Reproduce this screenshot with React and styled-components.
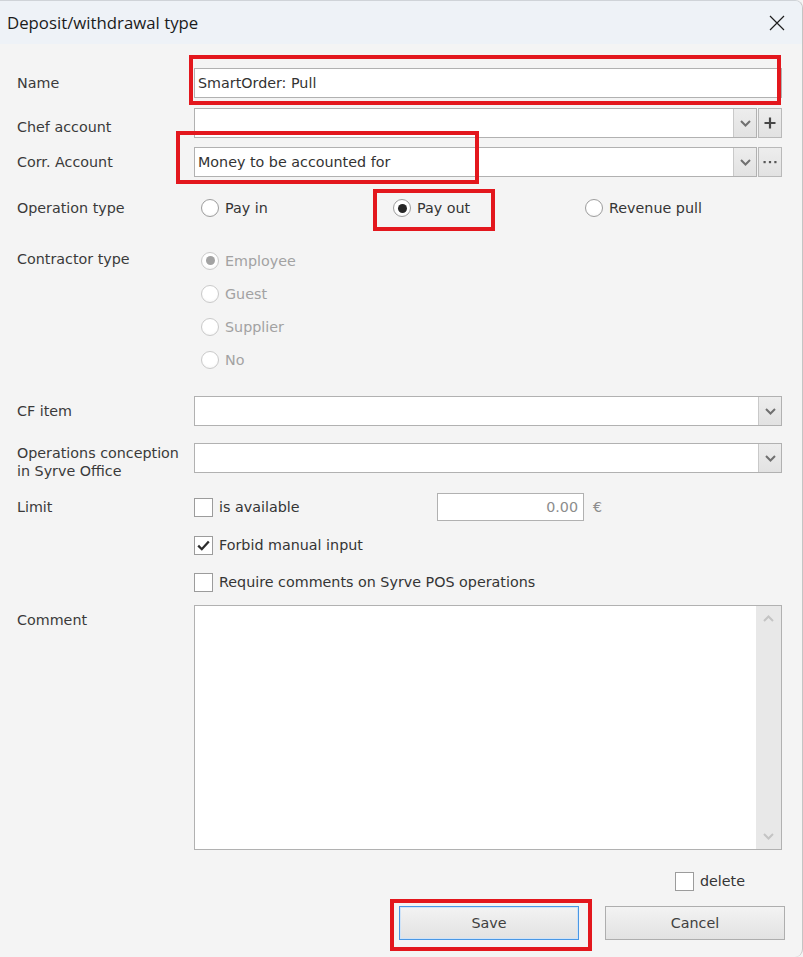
import React from 'react';
import styled, { createGlobalStyle, css } from 'styled-components';

const GlobalStyle = createGlobalStyle`
  html, body { margin: 0; padding: 0; background: #f4f4f4; }
  body { font-family: "DejaVu Sans", Verdana, sans-serif; }
  * { box-sizing: border-box; }
`;

const Window = styled.div`
  position: relative;
  width: 803px;
  height: 957px;
  background: #f4f4f4;
  border-top: 1px solid #cfd3d8;
  border-right: 1px solid #c4c4c4;
  border-top-right-radius: 8px;
  border-bottom-right-radius: 8px;
  overflow: hidden;
  display: flex;
  flex-direction: column;
`;

const TitleBar = styled.div`
  height: 43px;
  flex: none;
  background: #eef2f7;
  display: flex;
  align-items: center;
  justify-content: space-between;
  padding-left: 7px;
`;

const Title = styled.div`
  font-family: "Open Sans", "Noto Sans", sans-serif;
  font-size: 16.8px;
  color: #1b1b1b;
`;

const CloseButton = styled.div`
  width: 50px;
  height: 43px;
  display: flex;
  align-items: center;
  justify-content: center;
`;

const Form = styled.div`
  padding: 0 20px 0 17px;
  display: flex;
  flex-direction: column;
`;

const Row = styled.div`
  display: grid;
  grid-template-columns: 177px 1fr;
  margin-top: ${(p) => p.$gap || 0}px;
  height: ${(p) => p.$h}px;
  align-items: ${(p) => (p.$top ? 'start' : 'center')};
`;

const Label = styled.div`
  font-size: 14.3px;
  line-height: 18px;
  color: #3a3a3a;
  padding-top: ${(p) => p.$pt || 0}px;
  align-self: ${(p) => (p.$top ? 'start' : 'center')};
`;

const Text = styled.span`
  font-size: 14.3px;
  line-height: 18px;
  color: ${(p) => (p.$disabled ? '#a2a2a2' : '#353535')};
  white-space: nowrap;
`;

const Combo = styled.div`
  display: flex;
  gap: 1px;
  height: ${(p) => p.$h || 30}px;
`;

const TextBox = styled.div`
  flex: 1;
  height: 100%;
  border: 1px solid #b1b1b1;
  background: #fff;
  display: flex;
  align-items: center;
  padding-left: 3px;
  overflow: hidden;
`;

const BoxValue = styled.span`
  flex: 1;
  font-size: 14.3px;
  color: #333;
  white-space: nowrap;
`;

const sideButton = css`
  width: 23px;
  height: 100%;
  flex: none;
  display: flex;
  align-items: center;
  justify-content: center;
  background: linear-gradient(#ededed, #e2e2e2);
`;

const DropButton = styled.div`
  ${sideButton};
  border-left: 1px solid #c9c9c9;
`;

const ExtraButton = styled.div`
  ${sideButton};
  width: 24px;
  border: 1px solid #b9b9b9;
`;

const RadioGroup = styled.div`
  display: grid;
  grid-template-columns: repeat(3, 192px);
  padding-left: 7px;
`;

const RadioStack = styled.div`
  display: flex;
  flex-direction: column;
  padding-left: 7px;
`;

const Option = styled.label`
  display: flex;
  align-items: center;
  gap: 6px;
  height: ${(p) => p.$h || 30}px;
`;

const RadioCircle = styled.span`
  width: 18px;
  height: 18px;
  flex: none;
  border-radius: 50%;
  border: 1px solid ${(p) => (p.$disabled ? '#cacaca' : '#9d9d9d')};
  background: radial-gradient(circle at 50% 40%, #ffffff 55%, #f0f0f0);
  display: flex;
  align-items: center;
  justify-content: center;
  &::after {
    content: '';
    display: ${(p) => (p.$checked ? 'block' : 'none')};
    width: 9px;
    height: 9px;
    border-radius: 50%;
    background: ${(p) => (p.$disabled ? '#a3a3a3' : '#262626')};
  }
`;

const CheckSquare = styled.span`
  width: 19px;
  height: 19px;
  flex: none;
  border: 1px solid #9c9c9c;
  background: #fff;
  display: flex;
  align-items: center;
  justify-content: center;
`;

const LimitLine = styled.div`
  display: grid;
  grid-template-columns: 243px 147px auto;
  align-items: center;
  height: 100%;
`;

const NumberBox = styled.div`
  height: 28px;
  border: 1px solid #b1b1b1;
  background: #fff;
  display: flex;
  align-items: center;
  justify-content: flex-end;
  padding-right: 5px;
  font-size: 14.3px;
  color: #8c8c8c;
`;

const Currency = styled.span`
  margin-left: 9px;
  font-size: 14.3px;
  color: #8c8c8c;
`;

const Memo = styled.div`
  height: 245px;
  border: 1px solid #b1b1b1;
  background: #fff;
  display: flex;
  justify-content: flex-end;
`;

const ScrollTrack = styled.div`
  width: 25px;
  height: 100%;
  background: #e8e8e8;
  display: flex;
  flex-direction: column;
  justify-content: space-between;
  align-items: center;
  padding: 9px 0;
`;

const DeleteRow = styled.div`
  margin-top: 16px;
  height: 30px;
  display: flex;
  justify-content: flex-end;
  padding-right: 37px;
`;

const ButtonRow = styled.div`
  margin-top: 10px;
  display: flex;
  justify-content: flex-end;
  gap: 26px;
  margin-right: -3px;
`;

const Button = styled.div`
  width: 180px;
  height: 34px;
  display: flex;
  align-items: center;
  justify-content: center;
  font-size: 14.3px;
  color: #404040;
  background: linear-gradient(#f3f3f3, #e2e2e2);
  border: 1px solid ${(p) => (p.$focused ? '#4a97e4' : '#aeaeae')};
  box-shadow: ${(p) => (p.$focused ? 'inset 0 0 0 1px #cfe3f8' : 'none')};
`;

const Highlight = styled.div`
  position: absolute;
  left: ${(p) => p.$x}px;
  top: ${(p) => p.$y}px;
  width: ${(p) => p.$w}px;
  height: ${(p) => p.$hh}px;
  border: 4px solid #e3171d;
  pointer-events: none;
`;

const Chevron = ({ up, color = '#707070' }) => (
  <svg width="11" height="7" viewBox="0 0 11 7">
    <path
      d={up ? 'M1 6 L5.5 1.5 L10 6' : 'M1 1 L5.5 5.5 L10 1'}
      fill="none"
      stroke={color}
      strokeWidth="2"
    />
  </svg>
);

const Plus = () => (
  <svg width="12" height="12" viewBox="0 0 12 12">
    <path d="M6 0.5 V11.5 M0.5 6 H11.5" stroke="#474747" strokeWidth="2.2" />
  </svg>
);

const Dots = () => (
  <svg width="14" height="4" viewBox="0 0 14 4">
    <rect x="0.5" y="1" width="2.2" height="2.2" fill="#555" />
    <rect x="5.9" y="1" width="2.2" height="2.2" fill="#555" />
    <rect x="11.3" y="1" width="2.2" height="2.2" fill="#555" />
  </svg>
);

const CloseIcon = () => (
  <svg width="16" height="16" viewBox="0 0 16 16">
    <path d="M1 1 L15 15 M15 1 L1 15" stroke="#1e1e1e" strokeWidth="1.2" />
  </svg>
);

const Tick = () => (
  <svg width="13" height="11" viewBox="0 0 13 11">
    <path d="M1.2 5.6 L4.8 9.2 L11.8 1.4" fill="none" stroke="#2c2c2c" strokeWidth="2.3" />
  </svg>
);

const Radio = ({ label, checked, disabled, h }) => (
  <Option $h={h}>
    <RadioCircle $checked={checked} $disabled={disabled} />
    <Text $disabled={disabled}>{label}</Text>
  </Option>
);

const Check = ({ label, checked }) => (
  <Option>
    <CheckSquare>{checked && <Tick />}</CheckSquare>
    <Text>{label}</Text>
  </Option>
);

const ComboField = ({ value, extra }) => (
  <Combo>
    <TextBox>
      <BoxValue>{value}</BoxValue>
      <DropButton>
        <Chevron />
      </DropButton>
    </TextBox>
    {extra && <ExtraButton>{extra}</ExtraButton>}
  </Combo>
);

export default function App() {
  return (
    <>
      <GlobalStyle />
      <Window>
        <TitleBar>
          <Title>Deposit/withdrawal type</Title>
          <CloseButton>
            <CloseIcon />
          </CloseButton>
        </TitleBar>

        <Form>
          <Row $gap={24} $h={30}>
            <Label>Name</Label>
            <Combo>
              <TextBox>
                <BoxValue>SmartOrder: Pull</BoxValue>
              </TextBox>
            </Combo>
          </Row>

          <Row $gap={10} $h={30}>
            <Label $pt={8}>Chef account</Label>
            <ComboField value="" extra={<Plus />} />
          </Row>

          <Row $gap={9} $h={30}>
            <Label>Corr. Account</Label>
            <ComboField value="Money to be accounted for" extra={<Dots />} />
          </Row>

          <Row $gap={16} $h={30}>
            <Label>Operation type</Label>
            <RadioGroup>
              <Radio label="Pay in" />
              <Radio label="Pay out" checked />
              <Radio label="Revenue pull" />
            </RadioGroup>
          </Row>

          <Row $gap={21} $h={132} $top>
            <Label $top $pt={6}>Contractor type</Label>
            <RadioStack>
              <Radio label="Employee" checked disabled h={33} />
              <Radio label="Guest" disabled h={33} />
              <Radio label="Supplier" disabled h={33} />
              <Radio label="No" disabled h={33} />
            </RadioStack>
          </Row>

          <Row $gap={20} $h={29}>
            <Label>CF item</Label>
            <ComboField value="" />
          </Row>

          <Row $gap={18} $h={29} $top>
            <Label $top $pt={1}>
              Operations conception
              <br />
              in Syrve Office
            </Label>
            <ComboField value="" />
          </Row>

          <Row $gap={20} $h={30}>
            <Label>Limit</Label>
            <LimitLine>
              <Check label="is available" />
              <NumberBox>0.00</NumberBox>
              <Currency>€</Currency>
            </LimitLine>
          </Row>

          <Row $gap={8} $h={30}>
            <span />
            <Check label="Forbid manual input" checked />
          </Row>

          <Row $gap={7} $h={30}>
            <span />
            <Check label="Require comments on Syrve POS operations" />
          </Row>

          <Row $gap={8} $h={245} $top>
            <Label $top $pt={6}>Comment</Label>
            <Memo>
              <ScrollTrack>
                <Chevron up color="#c4c4c4" />
                <Chevron color="#c4c4c4" />
              </ScrollTrack>
            </Memo>
          </Row>

          <DeleteRow>
            <Check label="delete" />
          </DeleteRow>

          <ButtonRow>
            <Button $focused>Save</Button>
            <Button>Cancel</Button>
          </ButtonRow>
        </Form>

        <Highlight $x={189} $y={54} $w={592} $hh={50} />
        <Highlight $x={176} $y={130} $w={303} $hh={53} />
        <Highlight $x={373} $y={188} $w={122} $hh={42} />
        <Highlight $x={390} $y={898} $w={202} $hh={52} />
      </Window>
    </>
  );
}
